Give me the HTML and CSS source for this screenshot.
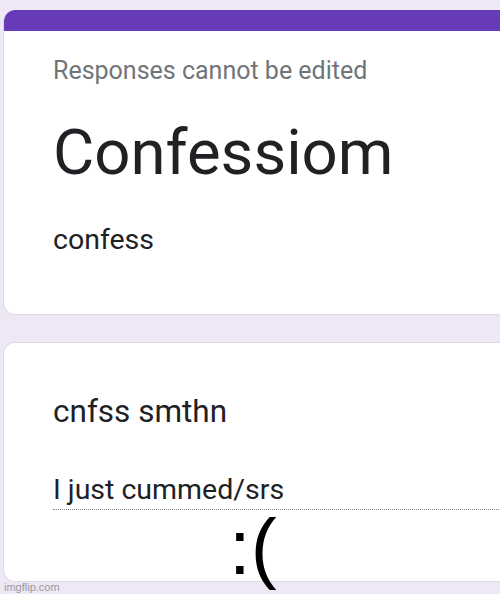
FILE: index.html
```html
<!DOCTYPE html>
<html>
<head>
<meta charset="utf-8">
<link rel="stylesheet" href="styles.css">
</head>
<body>
<div class="page">
  <section class="card card-header">
    <div class="band"></div>
    <div class="card-body header-body">
      <p class="note">Responses cannot be edited</p>
      <h1 class="title">Confessiom</h1>
      <p class="desc">confess</p>
    </div>
  </section>
  <section class="card card-question">
    <div class="card-body question-body">
      <p class="question">cnfss smthn</p>
      <p class="answer">I just cummed/srs</p>
    </div>
  </section>
  <div class="watermark">imgflip.com</div>
  <div class="meme-caption">:(</div>
</div>
</body>
</html>
```
FILE: styles.css
```css
html, body {
  margin: 0;
  padding: 0;
  background: #ede7f6;
  width: 500px;
  height: 594px;
  overflow: hidden;
}
.page {
  position: relative;
  height: 594px;
  padding: 10px 0 0 3px;
  box-sizing: border-box;
  display: flex;
  flex-direction: column;
  gap: 27px;
  font-family: Roboto, "Liberation Sans", sans-serif;
}
.card {
  background: #fff;
  border: 1px solid #dadce0;
  border-right: none;
  border-radius: 12px 0 0 12px;
  width: 520px;
  box-sizing: border-box;
  overflow: hidden;
  flex: none;
}
.card-header {
  height: 305px;
  border-top: none;
}
.band {
  height: 21px;
  background: #673ab7;
}
.card-body {
  padding-left: 49px;
}
p, h1 { margin: 0; }
.note {
  font-size: 25px;
  color: #70757a;
  line-height: 30px;
  margin-top: 25px;
}
.title {
  font-size: 63.5px;
  font-weight: 400;
  color: #202124;
  line-height: 80px;
  margin-top: 27px;
}
.desc {
  font-size: 28.5px;
  color: #202124;
  line-height: 34px;
  margin-top: 30px;
}
.card-question {
  height: 240px;
}
.question {
  font-size: 31.5px;
  color: #202124;
  line-height: 38px;
  margin-top: 50px;
}
.answer {
  font-size: 28.5px;
  color: #202124;
  line-height: 34px;
  margin-top: 42px;
  padding-bottom: 2px;
  border-bottom: 1px dotted #80868b;
}
.watermark {
  position: absolute;
  left: 4px;
  bottom: 1px;
  font-family: "Liberation Sans", Arial, sans-serif;
  font-size: 11px;
  color: #9a9a9a;
}
.meme-caption {
  position: absolute;
  left: 229px;
  top: 502px;
  font-family: "Liberation Sans", Arial, sans-serif;
  font-size: 78px;
  line-height: 90px;
  color: #000;
}
```
